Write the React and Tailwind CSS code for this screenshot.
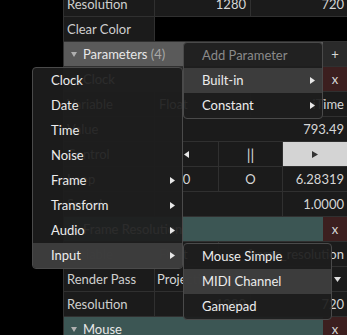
import React from "react";

const LINE = "border-[#303030]";

function Tri({ dir = "right", color = "#e6e6e6", w = 6, h = 8 }) {
  const pts =
    dir === "right"
      ? `0,0 ${w},${h / 2} 0,${h}`
      : dir === "left"
      ? `${w},0 0,${h / 2} ${w},${h}`
      : `0,0 ${w},0 ${w / 2},${h}`;
  return (
    <svg width={w} height={h} viewBox={`0 0 ${w} ${h}`} className="block">
      <polygon points={pts} fill={color} />
    </svg>
  );
}

function Row({ children, className = "" }) {
  return (
    <div className={`flex h-[25px] shrink-0 border-b ${LINE} ${className}`}>{children}</div>
  );
}

function Label({ children }) {
  return (
    <div className={`w-[91px] shrink-0 border-r ${LINE} bg-[#1b1b1b] pl-[3px] flex items-center text-[#cfcfcf] whitespace-nowrap overflow-hidden`}>
      {children}
    </div>
  );
}

function Cell({ children, className = "" }) {
  return (
    <div className={`flex items-center bg-[#1b1b1b] text-[#d6d6d6] whitespace-nowrap overflow-hidden ${className}`}>
      {children}
    </div>
  );
}

function Header({ title, count, bg, btn, btnBg }) {
  return (
    <Row className={bg}>
      <div className="flex-1 flex items-center pl-[7px] gap-[6px] text-[#e8e8e8] whitespace-nowrap">
        <Tri dir="down" color="#b0b0b0" w={6} h={5} />
        <span>
          {title}
          {count && <span className="text-[#a8a8a8]"> {count}</span>}
        </span>
      </div>
      <div className={`w-[24px] shrink-0 flex items-center justify-center text-[#d8d8d8] ${btnBg}`}>
        {btn}
      </div>
    </Row>
  );
}

function MenuItem({ children, arrow, active, disabled }) {
  return (
    <div
      className={`h-[25px] flex items-center justify-between pl-[18px] pr-[7px] whitespace-nowrap ${
        active ? "bg-[rgba(62,62,62,0.95)]" : ""
      } ${disabled ? "text-[#8a8a8a]" : "text-[#ececec]"}`}
    >
      <span>{children}</span>
      {arrow && <Tri dir="right" color="#e8e8e8" w={5} h={7} />}
    </div>
  );
}

function Menu({ className, children }) {
  return (
    <div
      className={`absolute flex flex-col border border-[#4a4a4a] rounded-[4px] bg-[rgba(29,29,29,0.93)] overflow-hidden ${className}`}
    >
      {children}
    </div>
  );
}

export default function App() {
  return (
    <div className="relative w-[347px] h-[335px] overflow-hidden bg-black font-['Lato',sans-serif] text-[13px] leading-none">
      <div className={`ml-[63px] -mt-[8px] flex flex-col border-l ${LINE}`}>
        <Row>
          <Label>Resolution</Label>
          <Cell className={`w-[96px] justify-end pr-[4px] border-r ${LINE}`}>1280</Cell>
          <Cell className="flex-1 justify-end pr-[3px]">720</Cell>
        </Row>
        <Row>
          <Label>Clear Color</Label>
          <div className="flex-1 bg-black" />
        </Row>
        <Header title="Parameters" count="(4)" bg="bg-[#5a5a5a]" btn="+" btnBg="bg-[#2a2a2a]" />
        <Header title="Clock" bg="bg-[#2a2a2a]" btn="x" btnBg="bg-[#3c1f1f]" />
        <Row>
          <Label>Variable</Label>
          <Cell className={`w-[96px] pl-[4px] border-r ${LINE}`}>Float</Cell>
          <Cell className="flex-1 justify-end pr-[3px]">iTime</Cell>
        </Row>
        <Row>
          <Label>Value</Label>
          <Cell className="flex-1 justify-end pr-[3px]">793.49</Cell>
        </Row>
        <Row>
          <Label>Control</Label>
          <Cell className={`w-[64px] justify-center border-r ${LINE}`}>
            <Tri dir="left" color="#e6e6e6" w={5} h={7} />
          </Cell>
          <Cell className={`w-[64px] justify-center border-r ${LINE} text-[15px]`}>||</Cell>
          <div className="flex-1 flex items-center justify-center bg-[#d4d4d4]">
            <Tri dir="right" color="#333" w={6} h={7} />
          </div>
        </Row>
        <Row>
          <Label>Loop</Label>
          <Cell className={`w-[64px] justify-center border-r ${LINE}`}>0</Cell>
          <Cell className={`w-[64px] justify-center border-r ${LINE}`}>O</Cell>
          <Cell className="flex-1 justify-end pr-[3px]">6.28319</Cell>
        </Row>
        <Row>
          <Label>Speed</Label>
          <Cell className={`w-[128px] border-r ${LINE}`} />
          <Cell className="flex-1 justify-end pr-[3px]">1.0000</Cell>
        </Row>
        <Header title="Frame Resolution" bg="bg-[#3c5654]" btn="x" btnBg="bg-[#3c1f1f]" />
        <Row>
          <Label>Variable</Label>
          <Cell className={`w-[64px] pl-[4px] border-r ${LINE}`}>Float</Cell>
          <Cell className="flex-1 justify-end pr-[3px]">frame_resolution</Cell>
        </Row>
        <Row>
          <Label>Render Pass</Label>
          <Cell className="flex-1 justify-between pl-[2px] pr-[6px]">
            <span>Projection</span>
            <Tri dir="down" color="#e0e0e0" w={7} h={5} />
          </Cell>
        </Row>
        <Row>
          <Label>Resolution</Label>
          <Cell className={`w-[96px] justify-end pr-[4px] border-r ${LINE}`}>1280</Cell>
          <Cell className="flex-1 justify-end pr-[3px]">720</Cell>
        </Row>
        <Header title="Mouse" bg="bg-[#3c5654]" btn="x" btnBg="bg-[#3c1f1f]" />
      </div>

      <Menu className="left-[183px] top-[42px] w-[140px]">
        <MenuItem disabled>Add Parameter</MenuItem>
        <MenuItem arrow active>Built-in</MenuItem>
        <MenuItem arrow>Constant</MenuItem>
      </Menu>

      <Menu className="left-[32px] top-[67px] w-[151px]">
        <MenuItem>Clock</MenuItem>
        <MenuItem>Date</MenuItem>
        <MenuItem>Time</MenuItem>
        <MenuItem>Noise</MenuItem>
        <MenuItem arrow>Frame</MenuItem>
        <MenuItem arrow>Transform</MenuItem>
        <MenuItem arrow>Audio</MenuItem>
        <MenuItem arrow active>Input</MenuItem>
      </Menu>

      <Menu className="left-[183px] top-[243px] w-[149px]">
        <MenuItem>Mouse Simple</MenuItem>
        <MenuItem active>MIDI Channel</MenuItem>
        <MenuItem>Gamepad</MenuItem>
      </Menu>
    </div>
  );
}
